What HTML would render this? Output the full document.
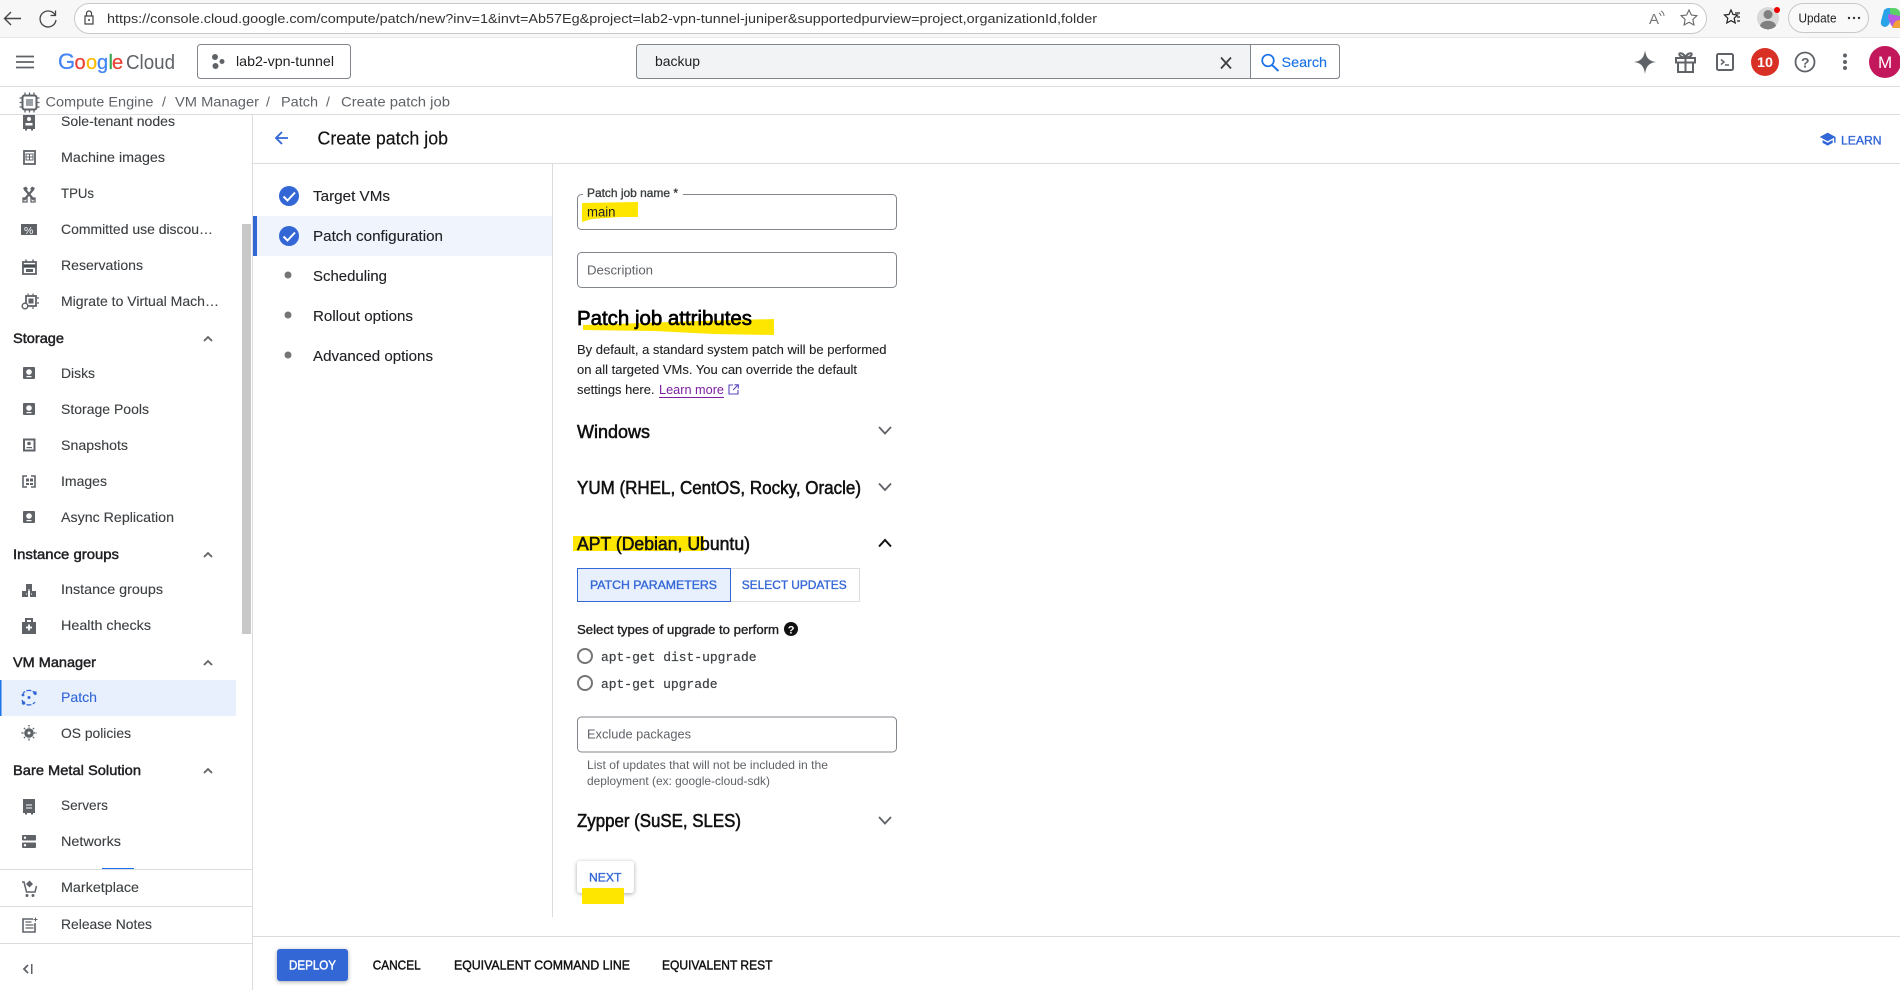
<!DOCTYPE html>
<html lang="en"><head><meta charset="utf-8"><title>Create patch job</title>
<style>
html,body{margin:0;padding:0;width:1900px;height:990px;overflow:hidden;background:#fff}
svg{display:block}
text{font-family:"Liberation Sans",Arial,sans-serif;font-size:14px;fill:#3c4043;white-space:pre}
.s{fill:#3c4043;stroke:#3c4043;stroke-width:.12}
.h{fill:#202124;stroke:#202124;stroke-width:.45}
.st{font-size:15px;fill:#202124;stroke:#202124;stroke-width:.12}
.sec{font-size:18px;fill:#111;stroke:#111;stroke-width:.55}
.p{font-size:13px;fill:#202124;stroke:#202124;stroke-width:.1}
.btn{font-size:12px;fill:#3367d6;stroke:#3367d6;stroke-width:.35}
.ft{font-size:12.5px;fill:#111;stroke:#111;stroke-width:.4}
.ph{font-size:13px;fill:#5f6368}
.mono{font-family:"Liberation Mono",monospace;font-size:13px;fill:#3c4043;stroke:#3c4043;stroke-width:.2}
.ic{fill:#5f6368}
.field{fill:#fff;stroke:#80868b;stroke-width:1}
.lift{filter:drop-shadow(0 1px 2px rgba(60,64,67,.45))}
</style></head><body>
<svg width="1900" height="990" viewBox="0 0 1900 990" xmlns="http://www.w3.org/2000/svg">
<rect width="1900" height="990" fill="#fff"/>
<!-- browser chrome -->
<rect width="1900" height="37" fill="#f7f7f7"/>
<rect x="0" y="37" width="1900" height="1" fill="#e8e8e8"/>
<rect x="74.500" y="3.500" width="1632" height="30" rx="15" fill="#fff" stroke="#c8c8c8"/>
<path d="M21 18.500H5M11 12l-6.500 6.500L11 25" fill="none" stroke="#444" stroke-width="1.400"/>
<path d="M55 15a8 8 0 1 0 1 5M55.500 10.500v5h-5" fill="none" stroke="#444" stroke-width="1.300"/>
<path d="M85 16h8v8h-8zM86.500 16v-2.500a2.500 2.500 0 0 1 5 0V16" fill="none" stroke="#444" stroke-width="1.200"/><circle cx="89" cy="20" r="1" fill="#444"/>
<text x="107" y="23" textLength="990" lengthAdjust="spacingAndGlyphs" style="font-size:13px;fill:#333">https://console.cloud.google.com/compute/patch/new?inv=1&amp;invt=Ab57Eg&amp;project=lab2-vpn-tunnel-juniper&amp;supportedpurview=project,organizationId,folder</text>
<text x="1649" y="24" style="font-size:15px;fill:#777">A</text>
<path d="M1661 11c2 1 3 3 3 5M1659 13c1 .5 2 2 2 3" fill="none" stroke="#777"/>
<path d="M1689 10l2.400 5 5.500.7-4 3.800 1 5.500-4.900-2.700-4.900 2.700 1-5.500-4-3.800 5.500-.7z" fill="none" stroke="#666" stroke-width="1.100"/>
<path d="M1731 10l2 4.500 4.500.5-3.300 3.200 1 4.800-4.200-2.400-4.200 2.400 1-4.800-3.300-3.200 4.500-.5z" fill="none" stroke="#222" stroke-width="1.200"/>
<path d="M1735 13h5M1737 17h3M1737 21h3" stroke="#222" stroke-width="1.200"/>
<circle cx="1768" cy="18" r="11" fill="#d8d8d8"/><circle cx="1768" cy="14.500" r="4.500" fill="#808080"/><path d="M1760 26c1-7 15-7 16 0a11 11 0 0 1-16 0z" fill="#808080"/>
<circle cx="1777" cy="10" r="3" fill="#e00"/>
<rect x="1788.500" y="3.500" width="80" height="29" rx="14.500" fill="#f9f9f9" stroke="#c8c8c8"/>
<text x="1798.500" y="22.500" textLength="38" lengthAdjust="spacingAndGlyphs" style="font-size:12.500px;fill:#222">Update</text>
<circle cx="1849" cy="18" r="1.200" fill="#333"/><circle cx="1854" cy="18" r="1.200" fill="#333"/><circle cx="1859" cy="18" r="1.200" fill="#333"/>
<path d="M1884 10q2-2 5-2h6l-5 14q-1 4-5 5q-5-1-4-6z" fill="#2aa3e8"/><path d="M1890 8h5q4 1 5 4v6l-4-2q-4 0-6-3z" fill="#5bd06a"/><path d="M1889 14q-2 3 0 6l2 5q2 3 5 3h4v-12z" fill="#b65ce0"/><path d="M1892 28h8v-8q-4 0-6 3z" fill="#f4a03a"/>

<!-- app header -->
<path d="M16 56.500h18M16 62h18M16 67.500h18" stroke="#5f6368" stroke-width="1.800"/>
<text x="58" y="69" style="font-size:22px;fill:#4285f4;stroke:#4285f4;stroke-width:.25">G</text>
<text x="74.500" y="69" style="font-size:20px;fill:#ea4335;stroke:#ea4335;stroke-width:.25">o</text>
<text x="86" y="69" style="font-size:20px;fill:#fbbc04;stroke:#fbbc04;stroke-width:.25">o</text>
<text x="97" y="69" style="font-size:20px;fill:#4285f4;stroke:#4285f4;stroke-width:.25">g</text>
<text x="108.500" y="69" style="font-size:20px;fill:#34a853;stroke:#34a853;stroke-width:.25">l</text>
<text x="112" y="69" style="font-size:20px;fill:#ea4335;stroke:#ea4335;stroke-width:.25">e</text>
<text x="126" y="69" textLength="49" lengthAdjust="spacingAndGlyphs" style="font-size:20px;fill:#5f6368">Cloud</text>
<rect x="197.500" y="44.500" width="153" height="34" rx="3" fill="#fff" stroke="#80868b"/>
<circle cx="215" cy="57" r="3" fill="#5f6368"/><circle cx="222" cy="61.500" r="2.500" fill="#5f6368"/><circle cx="215.500" cy="66" r="3" fill="#5f6368"/>
<text x="236" y="66" textLength="98" lengthAdjust="spacingAndGlyphs" style="font-size:14px;fill:#202124">lab2-vpn-tunnel</text>
<rect x="636.500" y="44.500" width="703" height="34" rx="3" fill="#f1f3f4" stroke="#80868b"/>
<path d="M1250.500 44.500H1336.500a3 3 0 0 1 3 3V75.500a3 3 0 0 1-3 3H1250.500z" fill="#fff" stroke="#80868b"/>
<text x="655" y="66" textLength="45" lengthAdjust="spacingAndGlyphs" style="font-size:14px;fill:#202124">backup</text>
<path d="M1221 57.500l10 11M1231 57.500l-10 11" stroke="#3c4043" stroke-width="1.800"/>
<circle cx="1268" cy="60.500" r="5.800" fill="none" stroke="#1a73e8" stroke-width="1.700"/><path d="M1272 65l6.500 6" stroke="#1a73e8" stroke-width="1.900"/>
<text x="1281.500" y="67" textLength="45.500" lengthAdjust="spacingAndGlyphs" style="font-size:14px;fill:#1a73e8;stroke:#1a73e8;stroke-width:.15">Search</text>
<path d="M1645 50c1 8 4 11 11 12c-7 1-10 4-11 12c-1-8-4-11-11-12c7-1 10-4 11-12z" fill="#5f6368"/>
<g fill="none" stroke="#5f6368" stroke-width="2"><rect x="1676" y="58" width="19" height="4.500"/><path d="M1678 62.500V72h15V62.500M1685.500 58V72M1685.500 57.500c-1-3-4-5-6-4c-1 2 2 4 6 4c4 0 7-2 6-4c-2-1-5 1-6 4"/></g>
<rect x="1717" y="54" width="16" height="16" rx="1.500" fill="none" stroke="#5f6368" stroke-width="2"/>
<path d="M1721 59.500l3 2.500-3 2.500M1725 65h4" fill="none" stroke="#5f6368" stroke-width="1.500"/>
<circle cx="1765" cy="62" r="14" fill="#d93025"/>
<text x="1757" y="67" textLength="16" lengthAdjust="spacingAndGlyphs" style="font-size:13.500px;font-weight:bold;fill:#fff">10</text>
<circle cx="1805" cy="62" r="9.500" fill="none" stroke="#5f6368" stroke-width="1.800"/>
<text x="1801" y="67.500" style="font-size:14px;fill:#5f6368;font-weight:bold">?</text>
<circle cx="1845" cy="55.500" r="2" fill="#5f6368"/><circle cx="1845" cy="62" r="2" fill="#5f6368"/><circle cx="1845" cy="68" r="2" fill="#5f6368"/>
<circle cx="1885" cy="62" r="16" fill="#c2185b"/>
<text x="1878" y="68" style="font-size:17px;fill:#fff">M</text>
<rect y="86" width="1900" height="1" fill="#dadce0"/>

<!-- breadcrumb -->
<rect x="22.500" y="95.500" width="14" height="14" rx="2" fill="none" stroke="#5f6368" stroke-width="2"/><rect x="26" y="99" width="7" height="7" fill="#9aa0a6"/>
<path d="M25 92.500v3M29.500 92.500v3M34 92.500v3M25 109.500v3M29.500 109.500v3M34 109.500v3M19.500 98h3M19.500 102.500h3M19.500 107h3M36.500 98h3M36.500 102.500h3M36.500 107h3" stroke="#5f6368" stroke-width="1.300"/>
<text x="45.500" y="106.500" textLength="108" lengthAdjust="spacingAndGlyphs" style="fill:#5f6368">Compute Engine</text>
<text x="162" y="106.500" style="fill:#5f6368">/</text>
<text x="175" y="106.500" textLength="84" lengthAdjust="spacingAndGlyphs" style="fill:#5f6368">VM Manager</text>
<text x="266" y="106.500" style="fill:#5f6368">/</text>
<text x="281" y="106.500" textLength="37" lengthAdjust="spacingAndGlyphs" style="fill:#5f6368">Patch</text>
<text x="326" y="106.500" style="fill:#5f6368">/</text>
<text x="341" y="106.500" textLength="109" lengthAdjust="spacingAndGlyphs" style="fill:#5f6368">Create patch job</text>
<rect y="114" width="1900" height="1" fill="#dadce0"/>

<!-- sidebar -->
<rect x="252" y="115" width="1" height="875" fill="#dadce0"/>
<rect x="242" y="224" width="9" height="410" fill="#c8c8c8"/>
<rect x="0" y="680" width="236" height="36" fill="#e8f0fe"/>
<rect x="0" y="680" width="1.500" height="36" fill="#1a73e8"/>
<text x="61" y="126" textLength="114" lengthAdjust="spacingAndGlyphs" class="s">Sole-tenant nodes</text>
<text x="61" y="162" textLength="104" lengthAdjust="spacingAndGlyphs" class="s">Machine images</text>
<text x="61" y="198" textLength="33" lengthAdjust="spacingAndGlyphs" class="s">TPUs</text>
<text x="61" y="234" textLength="152" lengthAdjust="spacingAndGlyphs" class="s">Committed use discou…</text>
<text x="61" y="270" textLength="82" lengthAdjust="spacingAndGlyphs" class="s">Reservations</text>
<text x="61" y="306" textLength="158" lengthAdjust="spacingAndGlyphs" class="s">Migrate to Virtual Mach…</text>
<text x="13" y="343" textLength="51" lengthAdjust="spacingAndGlyphs" class="h">Storage</text>
<text x="61" y="378" textLength="34" lengthAdjust="spacingAndGlyphs" class="s">Disks</text>
<text x="61" y="414" textLength="88" lengthAdjust="spacingAndGlyphs" class="s">Storage Pools</text>
<text x="61" y="450" textLength="67" lengthAdjust="spacingAndGlyphs" class="s">Snapshots</text>
<text x="61" y="486" textLength="46" lengthAdjust="spacingAndGlyphs" class="s">Images</text>
<text x="61" y="522" textLength="113" lengthAdjust="spacingAndGlyphs" class="s">Async Replication</text>
<text x="13" y="559" textLength="106" lengthAdjust="spacingAndGlyphs" class="h">Instance groups</text>
<text x="61" y="594" textLength="102" lengthAdjust="spacingAndGlyphs" class="s">Instance groups</text>
<text x="61" y="630" textLength="90" lengthAdjust="spacingAndGlyphs" class="s">Health checks</text>
<text x="13" y="667" textLength="83" lengthAdjust="spacingAndGlyphs" class="h">VM Manager</text>
<text x="61" y="702" textLength="36" lengthAdjust="spacingAndGlyphs" style="fill:#3367d6;stroke:#3367d6;stroke-width:.12">Patch</text>
<text x="61" y="738" textLength="70" lengthAdjust="spacingAndGlyphs" class="s">OS policies</text>
<text x="13" y="775" textLength="128" lengthAdjust="spacingAndGlyphs" class="h">Bare Metal Solution</text>
<text x="61" y="810" textLength="47" lengthAdjust="spacingAndGlyphs" class="s">Servers</text>
<text x="61" y="846" textLength="60" lengthAdjust="spacingAndGlyphs" class="s">Networks</text>
<text x="61" y="892" textLength="78" lengthAdjust="spacingAndGlyphs" class="s">Marketplace</text>
<text x="61" y="929" textLength="91" lengthAdjust="spacingAndGlyphs" class="s">Release Notes</text>
<!-- sidebar chevrons -->
<g fill="none" stroke="#5f6368" stroke-width="1.800">
<path d="M204 341l4-4 4 4M204 557l4-4 4 4M204 665l4-4 4 4M204 773l4-4 4 4"/>
<path d="M28 965l-4 4 4 4"/>
</g>
<rect x="31" y="964" width="1.500" height="10" fill="#5f6368"/>
<!-- sidebar separators -->
<rect x="102" y="868" width="32" height="1.500" fill="#1a73e8"/>
<rect y="869" width="252" height="1" fill="#dadce0"/>
<rect y="906" width="252" height="1" fill="#dadce0"/>
<rect y="943" width="252" height="1" fill="#dadce0"/>
<!-- sidebar icons -->
<path class="ic" d="M23 115h12v14h-2v1.500h-2V129h-4v1.500h-2V129h-2z"/><circle cx="29" cy="119" r="2" fill="#fff"/><rect x="25.500" y="123" width="7" height="2.500" fill="#fff"/>
<rect x="24" y="151" width="11" height="13" fill="none" stroke="#5f6368" stroke-width="1.800"/><path d="M26 154h7v6h-7zM29.500 154v6M26 157h7" fill="none" stroke="#5f6368"/>
<path d="M24.500 189l9.500 11M33.500 189l-9.500 11" stroke="#5f6368" stroke-width="2.200"/><path d="M23 188l3-1.500 2 2.500-3 2zM35 188l-3-1.500-2 2.500 3 2z" fill="#5f6368"/><path d="M23 198h4v4h-4zM31 198h4v4h-4z" fill="none" stroke="#5f6368" stroke-width="1.300"/>
<rect x="21" y="224" width="16" height="11" class="ic"/><text x="24" y="234" style="font-size:10.500px;fill:#fff">%</text>
<rect x="23" y="262" width="13" height="12" fill="none" stroke="#5f6368" stroke-width="1.800"/><path d="M23 265h13v2H23zM26 259.500v3M33 259.500v3" stroke="#5f6368" stroke-width="1.500"/><path d="M26 269h7v3h-7z" fill="#5f6368"/>
<rect x="26" y="296" width="10" height="10" fill="none" stroke="#5f6368" stroke-width="1.800"/><rect x="28.500" y="298.500" width="5" height="5" fill="#5f6368"/><path d="M28 293.500v2M33 293.500v2M37 298h2M37 303h2M33 307v2" stroke="#5f6368" stroke-width="1.200"/><circle cx="25" cy="306" r="2.800" fill="#fff" stroke="#5f6368" stroke-width="1.500"/>
<rect x="23" y="367" width="12" height="12" rx="1" class="ic"/><circle cx="29" cy="372" r="2.800" fill="#fff"/><rect x="26.500" y="376" width="5" height="1.200" fill="#fff"/>
<rect x="23" y="403" width="12" height="12" rx="1" class="ic"/><circle cx="29" cy="408" r="2.800" fill="#fff"/><rect x="26.500" y="412" width="5" height="1.200" fill="#fff"/>
<rect x="24" y="439.500" width="10.500" height="11" fill="none" stroke="#5f6368" stroke-width="2"/><circle cx="29" cy="443.500" r="1.800" fill="#5f6368"/><rect x="26.500" y="447" width="5.500" height="1.200" fill="#5f6368"/>
<path d="M27 476h-4v11h4M31 476h4v11h-4" fill="none" stroke="#5f6368" stroke-width="1.600"/><path d="M26 478.500h3v3h-3zM30 478.500h3v3h-3zM26 483h3v2h-3zM30 483h3v2h-3z" fill="#5f6368"/>
<rect x="23" y="511" width="12" height="12" rx="1" class="ic"/><circle cx="29" cy="516" r="2.800" fill="#fff"/><rect x="26.500" y="520" width="5" height="1.200" fill="#fff"/>
<path class="ic" d="M26 584h6v7h-6zM22 591h6v6h-6zM30 591h6v6h-6z"/><path d="M29 589v4M26 594h1M31 594h1" stroke="#fff"/>
<path class="ic" d="M22 622h14v12H22z"/><path d="M26 622v-3h6v3" fill="none" stroke="#5f6368" stroke-width="2"/><path d="M29 624.500v6M26 627.500h6" stroke="#fff" stroke-width="1.800"/>
<path d="M36 695a7.500 7.500 0 0 0-13-1.500M22 700a7.500 7.500 0 0 0 13 2" fill="none" stroke="#3367d6" stroke-width="1.300" stroke-dasharray="5 1.500"/><circle cx="29" cy="697.500" r="1.500" fill="#3367d6"/><circle cx="23.500" cy="703" r="1.700" fill="#3367d6"/><circle cx="35" cy="693" r="1.700" fill="#3367d6"/><circle cx="23" cy="695" r="1.400" fill="#3367d6"/>
<circle cx="29" cy="733" r="4.800" class="ic"/><circle cx="29" cy="733" r="1.500" fill="#fff"/><path d="M29 725v2.500M29 738.500v2.500M21.500 733h2.500M34 733h2.500M24 728l1.500 1.500M34 728l-1.500 1.500M24 738l1.500-1.500M34 738l-1.500-1.500" stroke="#5f6368" stroke-width="1.500" stroke-dasharray="1.400 .6"/>
<path class="ic" d="M23 799h12v14h-2v1.500h-2V813h-4v1.500h-2V813h-2z"/><path d="M26 805h6M26 808h6" stroke="#fff"/>
<rect x="22" y="835" width="14" height="5.500" rx="1" class="ic"/><rect x="22" y="842.500" width="14" height="5.500" rx="1" class="ic"/><circle cx="25" cy="837.700" r="1.200" fill="#fff"/><circle cx="25" cy="845.200" r="1.200" fill="#fff"/>
<path d="M22 882h2l2.500 10h8.500l1.500-6" fill="none" stroke="#5f6368" stroke-width="1.500"/><path d="M29.500 880.500l3.500 3.500-3.500 3.500-3.500-3.500z" class="ic"/><circle cx="27" cy="895.500" r="1.500" class="ic"/><circle cx="33" cy="895.500" r="1.500" class="ic"/>
<path d="M33 919h-10v13h12v-9" fill="none" stroke="#5f6368" stroke-width="1.600"/><path d="M25.500 922h6M25.500 925h8M25.500 928h8" stroke="#5f6368" stroke-width="1.200"/><path d="M35.500 917.500v4M33.500 919.500h4" stroke="#5f6368"/>

<!-- title bar -->
<path d="M288 138h-12M282 132l-6 6 6 6" fill="none" stroke="#3367d6" stroke-width="1.800"/>
<text x="317.500" y="144.500" textLength="130.500" lengthAdjust="spacingAndGlyphs" style="font-size:18px;fill:#111;stroke:#111;stroke-width:.15">Create patch job</text>
<path d="M5 13.180v4L12 21l7-3.820v-4L12 17l-7-3.820zM12 3L1 9l11 6 9-4.910V17h2V9L12 3z" fill="#3367d6" transform="translate(1819,130.500) scale(.72)"/>
<text x="1841" y="144.500" textLength="40.500" lengthAdjust="spacingAndGlyphs" class="btn">LEARN</text>
<rect x="253" y="163" width="1647" height="1" fill="#dadce0"/>

<!-- stepper -->
<rect x="253" y="216" width="299" height="40" fill="#eff4fd"/>
<rect x="253" y="216" width="4" height="40" fill="#3367d6"/>
<rect x="552" y="164" width="1" height="753" fill="#dadce0"/>
<circle cx="289" cy="196" r="10" fill="#3367d6"/><path d="M283.500 196.500l4 4 7.500-8" fill="none" stroke="#fff" stroke-width="2"/>
<circle cx="289" cy="236" r="10" fill="#3367d6"/><path d="M283.500 236.500l4 4 7.500-8" fill="none" stroke="#fff" stroke-width="2"/>
<circle cx="288" cy="275" r="3.500" fill="#757575"/><circle cx="288" cy="315" r="3.500" fill="#757575"/><circle cx="288" cy="355" r="3.500" fill="#757575"/>
<text x="313" y="201" textLength="77" lengthAdjust="spacingAndGlyphs" class="st">Target VMs</text>
<text x="313" y="241" textLength="130" lengthAdjust="spacingAndGlyphs" class="st">Patch configuration</text>
<text x="313" y="281" textLength="74" lengthAdjust="spacingAndGlyphs" class="st">Scheduling</text>
<text x="313" y="321" textLength="100" lengthAdjust="spacingAndGlyphs" class="st">Rollout options</text>
<text x="313" y="361" textLength="120" lengthAdjust="spacingAndGlyphs" class="st">Advanced options</text>

<!-- form -->
<rect x="577.500" y="194.500" width="319" height="35" rx="4" class="field"/>
<rect x="583" y="190" width="100" height="8" fill="#fff"/>
<path d="M582 203l56-1v15l-18 0-28 2-10 3z" fill="#ffe600"/>
<text x="587" y="197" textLength="91" lengthAdjust="spacingAndGlyphs" style="font-size:12px;fill:#3c4043;stroke:#3c4043;stroke-width:.35">Patch job name *</text>
<text x="587" y="216.500" textLength="28.500" lengthAdjust="spacingAndGlyphs" style="font-size:13.500px;fill:#202124">main</text>
<rect x="577.500" y="252.500" width="319" height="35" rx="4" class="field"/>
<text x="587" y="274.500" textLength="66" lengthAdjust="spacingAndGlyphs" class="ph">Description</text>
<path d="M583 325l117-4 74-2v16l-60-1-60-3-71-1z" fill="#ffe600"/>
<text x="577" y="325" textLength="175" lengthAdjust="spacingAndGlyphs" style="font-size:20px;fill:#000;stroke:#000;stroke-width:.65">Patch job attributes</text>
<text x="577" y="354" textLength="309.500" lengthAdjust="spacingAndGlyphs" class="p">By default, a standard system patch will be performed</text>
<text x="577" y="374" textLength="280" lengthAdjust="spacingAndGlyphs" class="p">on all targeted VMs. You can override the default</text>
<text x="577" y="394" textLength="77.500" lengthAdjust="spacingAndGlyphs" class="p">settings here.</text>
<text x="659" y="394" textLength="65" lengthAdjust="spacingAndGlyphs" style="font-size:13px;fill:#7b1fa2">Learn more</text>
<rect x="659" y="397" width="65" height="1" fill="#7b1fa2"/>
<path d="M733 385h-4v9h9v-4M733 390l5-5M734.500 384.800h3.800v3.800" fill="none" stroke="#5b45c0" stroke-width="1.100"/>
<text x="577" y="438" textLength="73" lengthAdjust="spacingAndGlyphs" class="sec">Windows</text>
<path d="M879 427l6 6.500 6-6.500" fill="none" stroke="#5f6368" stroke-width="1.800"/>
<text x="577" y="494" textLength="284" lengthAdjust="spacingAndGlyphs" class="sec">YUM (RHEL, CentOS, Rocky, Oracle)</text>
<path d="M879 483.500l6 6.500 6-6.500" fill="none" stroke="#5f6368" stroke-width="1.800"/>
<rect x="573" y="536" width="131" height="15" fill="#ffe600"/>
<text x="577" y="550" textLength="173" lengthAdjust="spacingAndGlyphs" class="sec">APT (Debian, Ubuntu)</text>
<path d="M879 546.500l6-6.500 6 6.500" fill="none" stroke="#111" stroke-width="2"/>
<rect x="730.500" y="568.500" width="129" height="33" fill="#fff" stroke="#dadce0"/>
<rect x="577.500" y="568.500" width="153" height="33" fill="#e8f0fe" stroke="#3367d6"/>
<text x="590" y="589" textLength="127" lengthAdjust="spacingAndGlyphs" class="btn">PATCH PARAMETERS</text>
<text x="741.700" y="589" textLength="105" lengthAdjust="spacingAndGlyphs" class="btn">SELECT UPDATES</text>
<text x="577" y="634" textLength="202" lengthAdjust="spacingAndGlyphs" style="font-size:13px;fill:#202124;stroke:#202124;stroke-width:.35">Select types of upgrade to perform</text>
<circle cx="791" cy="629" r="7" fill="#111"/>
<text x="787.700" y="633.500" style="font-size:11px;font-weight:bold;fill:#fff">?</text>
<circle cx="585" cy="656" r="7" fill="none" stroke="#757575" stroke-width="2"/>
<circle cx="585" cy="683" r="7" fill="none" stroke="#757575" stroke-width="2"/>
<text x="601" y="661" textLength="155.500" lengthAdjust="spacingAndGlyphs" class="mono">apt-get dist-upgrade</text>
<text x="601" y="688" textLength="116.500" lengthAdjust="spacingAndGlyphs" class="mono">apt-get upgrade</text>
<rect x="577.500" y="717" width="319" height="35" rx="4" class="field"/>
<text x="587" y="738.500" textLength="104" lengthAdjust="spacingAndGlyphs" class="ph">Exclude packages</text>
<text x="587" y="769" textLength="241" lengthAdjust="spacingAndGlyphs" style="font-size:12px;fill:#5f6368">List of updates that will not be included in the</text>
<text x="587" y="785" textLength="183" lengthAdjust="spacingAndGlyphs" style="font-size:12px;fill:#5f6368">deployment (ex: google-cloud-sdk)</text>
<text x="577" y="827" textLength="164" lengthAdjust="spacingAndGlyphs" class="sec">Zypper (SuSE, SLES)</text>
<path d="M879 817l6 6.500 6-6.500" fill="none" stroke="#5f6368" stroke-width="1.800"/>
<rect x="577" y="861" width="57" height="32" rx="3" fill="#fff" class="lift"/>
<text x="589" y="881.500" textLength="32.500" lengthAdjust="spacingAndGlyphs" class="btn">NEXT</text>
<rect x="582" y="888" width="42" height="16" fill="#ffe600"/>

<!-- footer -->
<rect x="253" y="936" width="1647" height="1" fill="#dadce0"/>
<rect x="277" y="949" width="71" height="32" rx="3" fill="#3367d6" class="lift"/>
<text x="289" y="969.500" textLength="47" lengthAdjust="spacingAndGlyphs" style="font-size:12.500px;fill:#fff;stroke:#fff;stroke-width:.4">DEPLOY</text>
<text x="372.700" y="969.500" textLength="48" lengthAdjust="spacingAndGlyphs" class="ft">CANCEL</text>
<text x="454" y="969.500" textLength="176" lengthAdjust="spacingAndGlyphs" class="ft">EQUIVALENT COMMAND LINE</text>
<text x="662" y="969.500" textLength="110.500" lengthAdjust="spacingAndGlyphs" class="ft">EQUIVALENT REST</text>
</svg>
</body></html>
